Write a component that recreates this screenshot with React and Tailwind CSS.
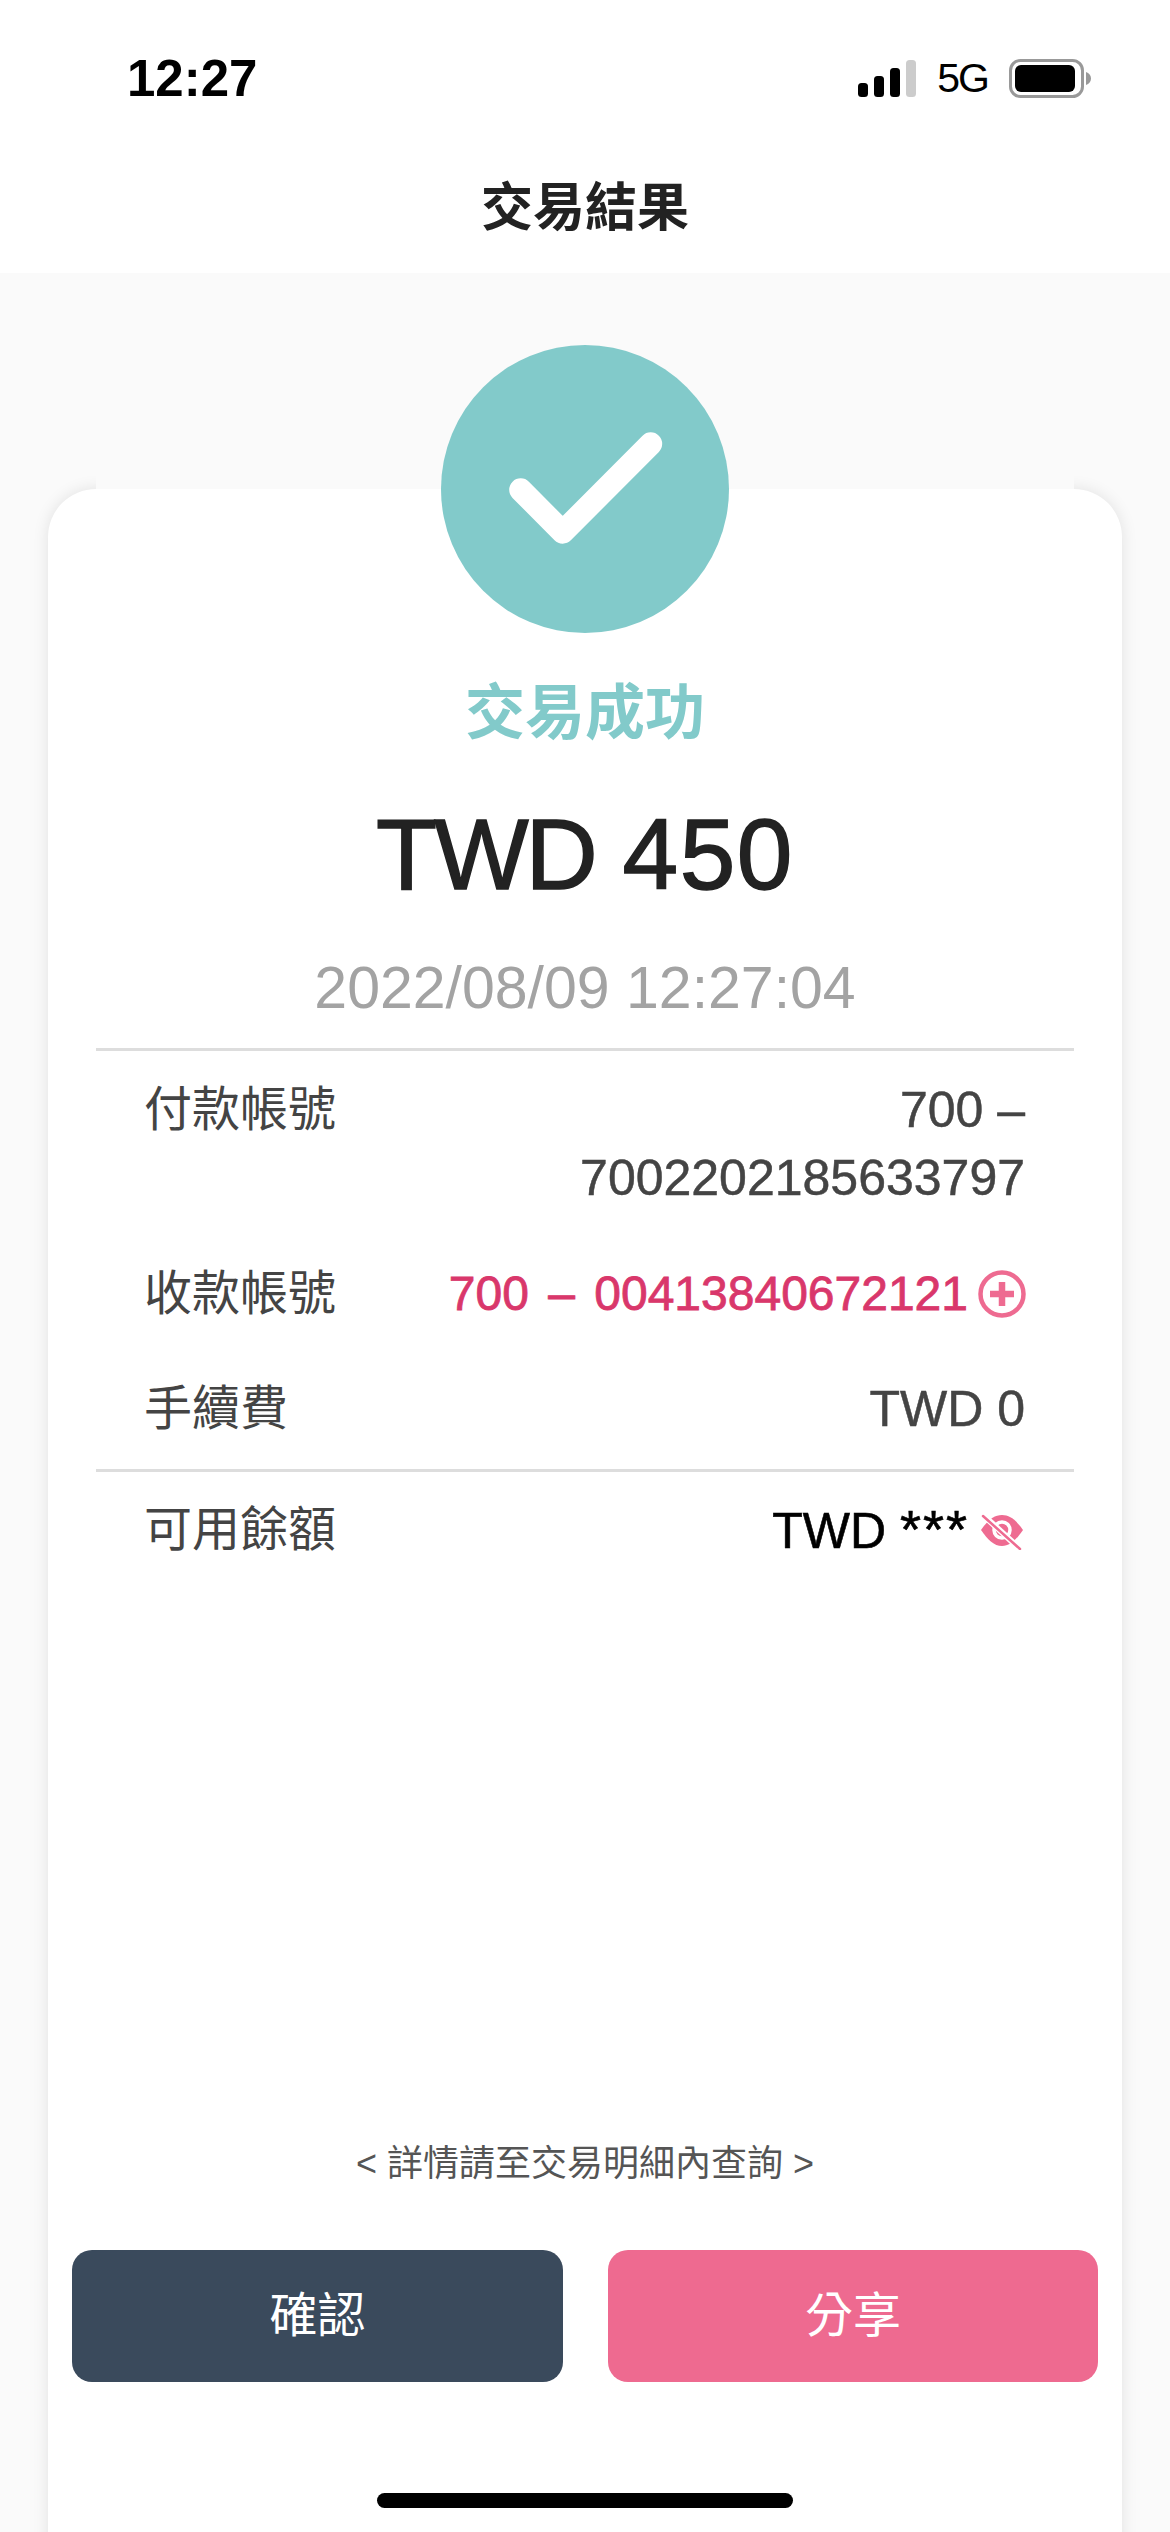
const latin = "font-['Liberation_Sans','Noto_Sans_CJK_TC',sans-serif]";

const Signal = () => (
  <svg width="58" height="37" viewBox="0 0 58 37">
    <rect x="0" y="23" width="10" height="14" rx="3.5" fill="#000" />
    <rect x="16" y="16" width="10" height="21" rx="3.5" fill="#000" />
    <rect x="32" y="8" width="10" height="29" rx="3.5" fill="#000" />
    <rect x="48" y="0" width="10" height="37" rx="3.5" fill="#ccc" />
  </svg>
);

const Battery = () => (
  <svg width="82" height="39" viewBox="0 0 82 39">
    <rect x="1.5" y="1.5" width="72" height="36" rx="10" fill="none" stroke="#999" strokeWidth="3" />
    <rect x="6" y="6" width="60" height="27" rx="6" fill="#000" />
    <path d="M77 13c3 1 5 3.500 5 6.500s-2 5.500-5 6.500z" fill="#999" />
  </svg>
);

const PlusCircle = () => (
  <svg width="48" height="48" viewBox="0 0 48 48" className="-mr-px shrink-0">
    <circle cx="24" cy="24" r="21.500" fill="none" stroke="#ee6b91" strokeWidth="4.500" />
    <path d="M24 12v24M12 24h24" stroke="#ee6b91" strokeWidth="6.500" />
  </svg>
);

const EyeOff = () => (
  <svg width="46" height="40" viewBox="0 0 46 40" className="shrink-0">
    <path d="M2 20C9 10 15 5 23 5s14 5 21 15c-7 10-13 16-21 16S9 30 2 20z" fill="#ee6b91" />
    <circle cx="23" cy="20" r="8" fill="none" stroke="#fff" strokeWidth="3.500" />
    <path d="M4 5L41 39" stroke="#fff" strokeWidth="6" />
    <path d="M4 6L41 39" stroke="#ee6b91" strokeWidth="2.500" strokeLinecap="round" />
  </svg>
);

const Row = ({ label, children, className = "" }) => (
  <div className={`flex justify-between pl-[48px] pr-[49px] ${className}`}>
    <span className="text-[48px] leading-[68px] text-[#444]">{label}</span>
    {children}
  </div>
);

export default function App() {
  return (
    <div className={`relative h-[2532px] w-[1170px] overflow-hidden bg-[#fafafa] ${latin}`}>
      <header className="h-[273px] bg-white">
        <div className="flex items-start justify-between pl-[127px] pr-[79px] pt-[52px]">
          <span className="text-[51px] font-bold leading-[54px] text-black">12:27</span>
          <div className="flex items-center gap-[21px] pt-[6px]">
            <Signal />
            <span className="text-[41px] leading-[40px] tracking-[-2px] text-black">5G</span>
            <Battery />
          </div>
        </div>
        <h1 className="mt-[67px] text-center text-[52px] font-bold leading-[70px] text-[#222]">交易結果</h1>
      </header>

      <main className="flex flex-col items-center px-[48px] pt-[72px]">
        <div className="relative z-10 -mb-[144px] flex h-[288px] w-[288px] shrink-0 items-center justify-center rounded-full bg-[#82caca]">
          <svg width="168" height="124" viewBox="0 0 168 124">
            <path d="M19.700 62.800L61.700 105.200L149.700 16.800" fill="none" stroke="#fff" strokeWidth="23" strokeLinecap="round" strokeLinejoin="round" />
          </svg>
        </div>

        <section className="relative h-[2100px] w-full rounded-t-[48px] bg-white px-[48px] pt-[183px] shadow-[0_0_16px_rgba(0,0,0,0.1)]">
          <div className="absolute -top-[16px] left-[48px] right-[48px] h-[16px] bg-[#fafafa]" />
          <p className="text-center text-[60px] font-bold leading-[84px] text-[#82caca]">交易成功</p>
          <p className="mt-[38px] text-center text-[100px] leading-[120px] text-[#222] [-webkit-text-stroke:1.5px_#222]">
            <span className="tracking-[-3px]">TWD</span> <span className="tracking-[1.5px]">450</span>
          </p>
          <p className="mt-[39px] text-center text-[59px] leading-[70px] text-[#a3a3a3]">2022/08/09 12:27:04</p>

          <div className="mt-[25px] border-t-[3px] border-[#ddd] pt-[25px]">
            <Row label="付款帳號">
              <span className="max-w-[520px] text-right text-[50px] leading-[68px] text-[#444] [-webkit-text-stroke:0.5px_#444]">700 – 7002202185633797</span>
            </Row>
            <Row label="收款帳號" className="mt-[48px] items-center">
              <div className="flex items-center gap-[10px]">
                <span className="text-[48px] leading-[68px] text-[#d9376b] [word-spacing:6px] [-webkit-text-stroke:0.8px_#d9376b]">700 – 00413840672121</span>
                <PlusCircle />
              </div>
            </Row>
            <Row label="手續費" className="mt-[47px]">
              <span className="text-[50px] leading-[68px] text-[#444] [-webkit-text-stroke:0.5px_#444]">TWD 0</span>
            </Row>
          </div>

          <div className="mt-[26px] border-t-[3px] border-[#ddd] pt-[23px]">
            <Row label="可用餘額" className="items-center">
              <div className="flex items-center gap-[10px]">
                <span className="text-[50px] leading-[68px] text-black [-webkit-text-stroke:0.6px_#000]">TWD <span className="text-[54px] tracking-[2px]">***</span></span>
                <EyeOff />
              </div>
            </Row>
          </div>

          <p className="mt-[574px] text-center text-[36px] leading-[50px] text-[#555]">&lt; 詳情請至交易明細內查詢 &gt;</p>

          <div className="-mx-[24px] mt-[61px] flex justify-between">
            <button className="h-[132px] w-[491px] rounded-[20px] bg-[#3a4a5c] text-[48px] text-white">確認</button>
            <button className="h-[132px] w-[490px] rounded-[20px] bg-[#ee6a90] text-[48px] text-white">分享</button>
          </div>

          <div className="mx-auto mt-[111px] h-[15px] w-[416px] rounded-full bg-black" />
        </section>
      </main>
    </div>
  );
}
